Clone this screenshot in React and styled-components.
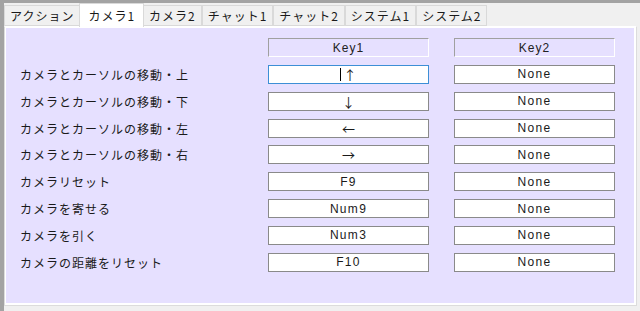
import React from "react";
import styled, { createGlobalStyle } from "styled-components";

const Global = createGlobalStyle`
  html, body { margin: 0; padding: 0; background: #f0f0f0; }
  body { width: 640px; height: 311px; overflow: hidden; font-family: "Noto Sans CJK JP", "Liberation Sans", sans-serif; }
`;

const Window = styled.div`
  width: 640px;
  height: 311px;
  box-sizing: border-box;
  border-top: 3px solid #a3a3a3;
  border-left: 4px solid #a3a3a3;
  background: #f0f0f0;
  display: flex;
  flex-direction: column;
`;

const TabStrip = styled.div`
  display: flex;
  height: 23px;
  align-items: flex-end;
  position: relative;
  z-index: 1;
`;

const Tab = styled.div`
  box-sizing: border-box;
  height: ${(p) => (p.$active ? "24px" : "21px")};
  padding: 0 ${(p) => (p.$active ? "8px" : "5px")};
  margin: 0 ${(p) => (p.$active ? "-1px" : "0")} ${(p) => (p.$active ? "-1px" : "0")};
  background: ${(p) => (p.$active ? "#ffffff" : "#f0f0f0")};
  border: 1px solid #d9d9d9;
  border-bottom: ${(p) => (p.$active ? "none" : "1px solid #d9d9d9")};
  font-size: 12px;
  letter-spacing: 1px;
  color: #1a1a1a;
  display: flex;
  align-items: center;
  white-space: nowrap;
`;

const Panel = styled.div`
  flex: 1;
  margin-right: 3px;
  margin-bottom: 5px;
  border: 1px solid #dcdcdc;
  border-top-color: #ffffff;
  background: #ffffff;
  padding: 1px 2px 2px 1px;
  display: flex;
`;

const Content = styled.div`
  flex: 1;
  background: #e6e0ff;
  padding: 10px 16px 0 14px;
  display: grid;
  grid-template-columns: 248px 161px 161px;
  grid-template-rows: 19px;
  grid-auto-rows: 19px;
  row-gap: 7.85px;
  align-content: start;
`;

const KeyCol = styled.div`
  grid-column: ${(p) => p.$col};
  margin-left: ${(p) => (p.$col === 3 ? "25px" : "0")};
  width: 161px;
  box-sizing: border-box;
`;

const HeaderBox = styled(KeyCol)`
  height: 19px;
  border: 1px solid #ffffff;
  border-top-color: #a0a0a0;
  border-left-color: #a0a0a0;
  display: flex;
  align-items: center;
  justify-content: center;
  font-family: "Liberation Sans", sans-serif;
  font-size: 12px;
  letter-spacing: 1px;
  color: #222;
`;

const KeyBox = styled(KeyCol)`
  height: 19px;
  background: #ffffff;
  border: 1px solid ${(p) => (p.$focus ? "#3d8fd6" : "#8a8a8a")};
  display: flex;
  align-items: center;
  justify-content: center;
  font-family: "Liberation Sans", "Noto Sans CJK JP", sans-serif;
  font-size: 12px;
  letter-spacing: 1.3px;
  color: #1a1a1a;
`;

const Arrow = styled.span`
  font-family: "Noto Sans CJK JP", sans-serif;
  font-size: 13px;
  letter-spacing: 0;
`;

const Caret = styled.span`
  display: inline-block;
  width: 1px;
  height: 13px;
  background: #000;
  margin-right: 2px;
`;

const Label = styled.div`
  grid-column: 1;
  font-size: 12px;
  letter-spacing: 1px;
  color: #1a1a1a;
  display: flex;
  align-items: center;
  white-space: nowrap;
`;

const Spacer = styled.div`
  grid-column: 1;
`;

const tabs = ["アクション", "カメラ1", "カメラ2", "チャット1", "チャット2", "システム1", "システム2"];

const arrows = ["↑", "↓", "←", "→"];

const rows = [
  ["カメラとカーソルの移動・上", "↑", "None", true],
  ["カメラとカーソルの移動・下", "↓", "None"],
  ["カメラとカーソルの移動・左", "←", "None"],
  ["カメラとカーソルの移動・右", "→", "None"],
  ["カメラリセット", "F9", "None"],
  ["カメラを寄せる", "Num9", "None"],
  ["カメラを引く", "Num3", "None"],
  ["カメラの距離をリセット", "F10", "None"],
];

export default function App() {
  return (
    <>
      <Global />
      <Window>
        <TabStrip>
          {tabs.map((t, i) => (
            <Tab key={t} $active={i === 1}>{t}</Tab>
          ))}
        </TabStrip>
        <Panel>
          <Content>
            <Spacer />
            <HeaderBox $col={2}>Key1</HeaderBox>
            <HeaderBox $col={3}>Key2</HeaderBox>
            {rows.map(([label, k1, k2, focus]) => (
              <React.Fragment key={label}>
                <Label>{label}</Label>
                <KeyBox $col={2} $focus={focus}>
                  {focus && <Caret />}
                  {arrows.includes(k1) ? <Arrow>{k1}</Arrow> : k1}
                </KeyBox>
                <KeyBox $col={3}>{k2}</KeyBox>
              </React.Fragment>
            ))}
          </Content>
        </Panel>
      </Window>
    </>
  );
}
